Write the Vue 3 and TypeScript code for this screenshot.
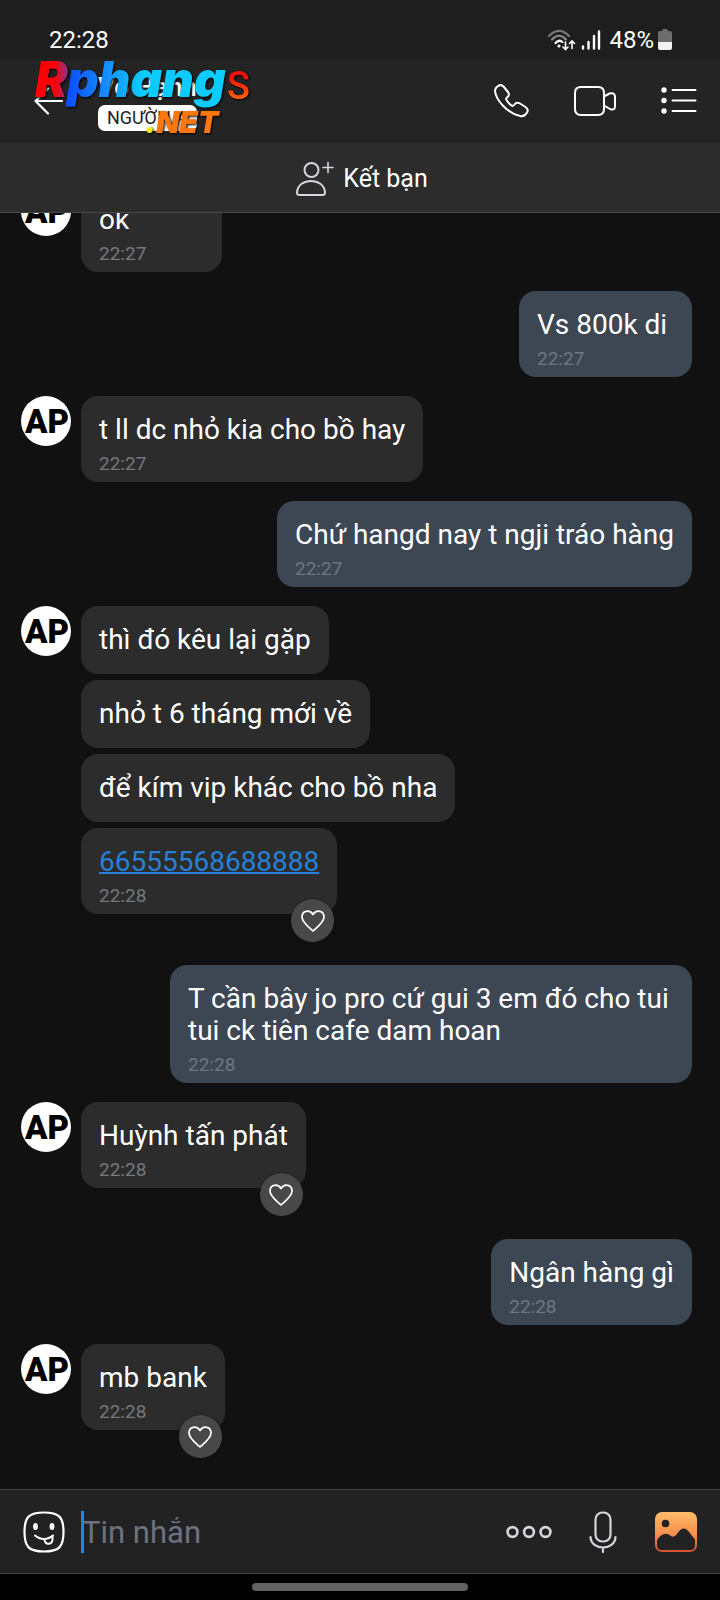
<script setup lang="ts">
import { ref } from 'vue'

interface Message {
  text: string
  time?: string
  link?: boolean
  liked?: boolean
}

interface Group {
  mine: boolean
  messages: Message[]
}

const draft = ref('')

const groups: Group[] = [
  { mine: false, messages: [{ text: 'ok', time: '22:27' }] },
  { mine: true, messages: [{ text: 'Vs 800k di', time: '22:27' }] },
  { mine: false, messages: [{ text: 't ll dc nhỏ kia cho bồ hay', time: '22:27' }] },
  { mine: true, messages: [{ text: 'Chứ hangd nay t ngji tráo hàng', time: '22:27' }] },
  {
    mine: false,
    messages: [
      { text: 'thì đó kêu lại gặp' },
      { text: 'nhỏ t 6 tháng mới về' },
      { text: 'để kím vip khác cho bồ nha' },
      { text: '66555568688888', time: '22:28', link: true, liked: true },
    ],
  },
  {
    mine: true,
    messages: [{ text: 'T cần bây jo pro cứ gui 3 em đó cho tui tui ck tiên cafe dam hoan', time: '22:28' }],
  },
  { mine: false, messages: [{ text: 'Huỳnh tấn phát', time: '22:28', liked: true }] },
  { mine: true, messages: [{ text: 'Ngân hàng gì', time: '22:28' }] },
  { mine: false, messages: [{ text: 'mb bank', time: '22:28', liked: true }] },
]
</script>

<template>
  <div class="phone">
    <div class="status">
      <span class="clock">22:28</span>
      <div class="indicators">
        <svg width="30" height="24" viewBox="0 0 30 24" fill="none" stroke-linecap="round" aria-hidden="true">
          <path d="M2 8Q12 -2 22 8" stroke="#777" stroke-width="2.2" />
          <path d="M5 11.500Q12 4 19 11.500" stroke="#8a8a8a" stroke-width="2.200" />
          <path d="M8.500 15Q12 11 15.500 14" stroke="#fff" stroke-width="2.200" />
          <circle cx="12" cy="18" r="1.600" fill="#fff" />
          <path d="M18.500 14v7.500M16 19l2.500 2.500 2.500-2.500M25 20.500v-7M22.500 15.500l2.500-2.500 2.500 2.500" stroke="#fff" stroke-width="1.600" />
        </svg>
        <svg width="20" height="22" viewBox="0 0 20 22" stroke="#fff" stroke-width="2.400" stroke-linecap="round" aria-hidden="true">
          <path d="M2 17.500v2M7.500 13v6.500M13 7v12.500M18 2.500v17" />
        </svg>
        <span class="percent">48%</span>
        <svg width="14" height="22" viewBox="0 0 14 22" aria-hidden="true">
          <path d="M4 2a2 2 0 0 1 2-2h2a2 2 0 0 1 2 2h2a2 2 0 0 1 2 2v9H0V4a2 2 0 0 1 2-2z" fill="#6d6d6d" />
          <path d="M0 13h14v6a2 2 0 0 1-2 2H2a2 2 0 0 1-2-2z" fill="#f2f2f2" />
        </svg>
      </div>
    </div>

    <header class="header">
      <button class="icon-button back" type="button" aria-label="Quay lại">
        <svg width="30" height="28" viewBox="0 0 30 28" fill="none" stroke="#fff" stroke-width="2.200" stroke-linecap="round" stroke-linejoin="round">
          <path d="M28 14H1.500M14 1.500L1.500 14L14 26.500" />
        </svg>
      </button>
      <div class="contact">
        <h1 class="name">Võ Hạnh</h1>
        <span class="tag">NGƯỜI LẠ</span>
      </div>
      <div class="actions">
        <button class="icon-button" type="button" aria-label="Gọi thoại">
          <svg width="36" height="36" viewBox="0 0 36 36" fill="none" stroke="#fff" stroke-width="2" stroke-linejoin="round">
            <path d="M2 8Q2 5 5 3Q8 1 10.500 3.500L15 9Q17 12 14.500 14Q12.500 15.500 13.500 17C15 19.500 16 21 18.500 22.500Q20 23.500 21.500 21.500Q23.500 18.500 27 20.500L32.500 24Q36 26.500 34 29.500Q31.500 34 27 33C14 30 3 17 2 8Z" />
          </svg>
        </button>
        <button class="icon-button" type="button" aria-label="Gọi video">
          <svg width="44" height="32" viewBox="0 0 44 32" fill="none" stroke="#fff" stroke-width="2" stroke-linejoin="round">
            <path d="M8 2H25Q31 2 31 8V11.500L36.500 8.500Q42 7 42 12V21Q42 26 37 24L31 20.500V24Q31 30 25 30H8Q2 30 2 24V8Q2 2 8 2ZM31 11.500V20.500" />
          </svg>
        </button>
        <button class="icon-button" type="button" aria-label="Tùy chọn">
          <svg width="36" height="28" viewBox="0 0 36 28" aria-hidden="true">
            <g fill="#fff"><circle cx="3" cy="3" r="2.700" /><circle cx="3" cy="13.500" r="2.700" /><circle cx="3" cy="24" r="2.700" /></g>
            <path d="M11.500 3H34.500M11.500 13.500H34.500M11.500 24H34.500" stroke="#fff" stroke-width="2" stroke-linecap="round" />
          </svg>
        </button>
      </div>
      <svg class="watermark" width="224" height="84" viewBox="0 0 224 84" aria-label="Rphangs.NET">
        <defs>
          <linearGradient id="wm-r" x1="0" x2="1"><stop offset="0.600" stop-color="#fb0206" /><stop offset="1" stop-color="#7d3aa0" /></linearGradient>
          <linearGradient id="wm-p" gradientUnits="userSpaceOnUse" x1="34" x2="110" y1="0" y2="0"><stop offset="0" stop-color="#0b4bff" /><stop offset="0.500" stop-color="#1689ff" /><stop offset="1" stop-color="#0ccbff" /></linearGradient>
          <linearGradient id="wm-s" x1="0" x2="0" y1="0" y2="1"><stop offset="0.300" stop-color="#f5100c" /><stop offset="0.900" stop-color="#ff7308" /></linearGradient>
        </defs>
        <text class="wm-main" x="3" y="38" fill="url(#wm-r)">R</text>
        <text class="wm-main" x="35" y="38" fill="url(#wm-p)">phang</text>
        <text class="wm-s" x="195" y="40" fill="url(#wm-s)">S</text>
        <text class="wm-net" x="113" y="74"><tspan fill="#f4ed13">.</tspan><tspan fill="#ff760c">NET</tspan></text>
      </svg>
    </header>

    <button class="add-friend" type="button">
      <svg width="38" height="36" viewBox="0 0 38 36" fill="none" stroke="#d5d5df" stroke-width="2" stroke-linecap="round" stroke-linejoin="round" aria-hidden="true">
        <circle cx="15.500" cy="9" r="7" />
        <path d="M3.500 34Q1 34 1 31.500C2 16 28 16 29 31.500Q29 34 26.500 34Z" />
        <path d="M32 1.500V11.500M27 6.500H37" stroke-width="1.600" />
      </svg>
      <span>Kết bạn</span>
    </button>

    <main class="chat">
      <section v-for="(group, g) in groups" :key="g" class="group" :class="{ mine: group.mine }">
        <svg v-if="!group.mine" class="avatar" width="50" height="50" viewBox="0 0 50 50" aria-label="AP">
          <circle cx="25" cy="25" r="25" fill="#fff" />
          <text class="avatar-text" x="26" y="37" text-anchor="middle">AP</text>
        </svg>
        <div class="stack">
          <div
            v-for="(message, m) in group.messages"
            :key="m"
            class="bubble"
            :class="{ timed: message.time, liked: message.liked }"
          >
            <a v-if="message.link" class="text link" :href="'tel:' + message.text">{{ message.text }}</a>
            <p v-else class="text">{{ message.text }}</p>
            <time v-if="message.time" class="time">{{ message.time }}</time>
            <button v-if="message.liked" class="heart" type="button" aria-label="Thả tim">
              <svg width="24" height="22" viewBox="0 0 24 22" fill="none" stroke="#fff" stroke-width="1.700" stroke-linejoin="round">
                <path d="M12 21C9 18 1 12.500 1 7C1 1 8.500-1 12 4.500C15.500-1 23 1 23 7C23 12.500 15 18 12 21Z" />
              </svg>
            </button>
          </div>
        </div>
      </section>
    </main>

    <form class="composer" @submit.prevent>
      <button class="icon-button" type="button" aria-label="Biểu tượng cảm xúc">
        <svg width="42" height="42" viewBox="0 0 42 42" fill="none" stroke="#fff" stroke-width="2.200" stroke-linecap="round" stroke-linejoin="round">
          <path d="M21 1.500C36 1.500 40.500 6 40.500 21S36 40.500 21 40.500S1.500 36 1.500 21S6 1.500 21 1.500Z" />
          <ellipse cx="12.500" cy="15.500" rx="2.400" ry="3.500" fill="#fff" stroke="none" />
          <ellipse cx="29" cy="15.500" rx="2.400" ry="3.500" fill="#fff" stroke="none" />
          <path d="M12 24.500C17 29 25 29 30 24.500M21.500 28C21 34 29.500 34.500 29.500 28.500V25" stroke-width="2" />
        </svg>
      </button>
      <label class="field">
        <span class="caret" aria-hidden="true"></span>
        <input v-model="draft" class="input" type="text" placeholder="Tin nhắn" aria-label="Tin nhắn" />
      </label>
      <div class="tools">
        <button class="icon-button" type="button" aria-label="Thêm">
          <svg width="46" height="14" viewBox="0 0 46 14" fill="none" stroke="#d5d5df" stroke-width="2.600">
            <circle cx="6.500" cy="7" r="4.900" /><circle cx="23" cy="7" r="4.900" /><circle cx="39.500" cy="7" r="4.900" />
          </svg>
        </button>
        <button class="icon-button" type="button" aria-label="Ghi âm">
          <svg width="28" height="42" viewBox="0 0 28 42" fill="none" stroke="#d5d5df" stroke-width="2.200" stroke-linecap="round">
            <rect x="6.500" y="1.500" width="15" height="29" rx="7" />
            <path d="M1.500 26C2 40 26 40 26.500 26M14 37V41" />
          </svg>
        </button>
        <button class="icon-button" type="button" aria-label="Gửi ảnh">
          <svg width="44" height="40" viewBox="0 0 44 40">
            <defs><linearGradient id="photo" x1="0" x2="0" y1="0" y2="1"><stop offset="0" stop-color="#ffbd69" /><stop offset="0.600" stop-color="#f58a4b" /><stop offset="1" stop-color="#d45432" /></linearGradient></defs>
            <rect x="1" y="0" width="42" height="40" rx="7" fill="url(#photo)" />
            <circle cx="11.500" cy="11.500" r="3.800" fill="#222" />
            <path d="M3 28C8 21 12 20 17 24Q20 26 23 22C28 14 32 16 35 20L41 27.500V33Q41 38 36 38H8Q3 38 3 33Z" fill="#222" />
          </svg>
        </button>
      </div>
    </form>
    <div class="nav"><span class="handle"></span></div>
  </div>
</template>

<style>
body {
  background: #111;
}
</style>

<style scoped>
* {
  box-sizing: border-box;
}

button {
  border: 0;
  padding: 0;
  background: none;
  color: inherit;
  font: inherit;
}

svg {
  display: block;
  flex: none;
}

.phone {
  display: flex;
  flex-direction: column;
  height: 100vh;
  background: #111;
  color: #fff;
  font-family: Roboto, "Noto Sans", sans-serif;
}

.status {
  display: flex;
  flex: none;
  align-items: center;
  justify-content: space-between;
  height: 59px;
  padding: 20px 48px 0 49px;
  background: #1e1e1e;
  font-size: 24px;
  line-height: 24px;
}

.indicators {
  display: flex;
  align-items: center;
  gap: 4px;
}

.percent {
  margin-left: 4px;
}

.header {
  position: relative;
  display: flex;
  flex: none;
  align-items: center;
  height: 84px;
  padding: 0 23px 0 34px;
  background: #242424;
}

.contact {
  display: flex;
  flex: 1;
  flex-direction: column;
  align-items: flex-start;
  gap: 3px;
  margin-left: 34px;
}

.name {
  margin: 0;
  font-size: 26px;
  font-weight: 500;
  line-height: 30px;
}

.tag {
  padding: 0 9px;
  border-radius: 7px;
  background: #fff;
  color: #222;
  font-size: 18px;
  line-height: 26px;
}

.actions {
  display: flex;
  align-items: center;
  gap: 44px;
}

.watermark {
  position: absolute;
  top: 0;
  left: 32px;
  filter: drop-shadow(1px 1px 1px #000);
}

.wm-main {
  font: italic 900 49px Inter, sans-serif;
}

.wm-s {
  font: 500 38px Roboto, sans-serif;
}

.wm-net {
  font: italic 900 30px Inter, sans-serif;
}

.add-friend {
  display: flex;
  flex: none;
  align-items: center;
  justify-content: center;
  gap: 9px;
  height: 70px;
  padding: 2px 0 0 4px;
  border-bottom: 1px solid #484848;
  background: #2c2c2c;
  font-size: 25px;
}

.chat {
  display: flex;
  flex: 1;
  flex-direction: column;
  justify-content: flex-end;
  gap: 19px;
  min-height: 0;
  padding: 0 28px 27px 21px;
  overflow: hidden;
}

.group {
  display: flex;
  flex: none;
  align-items: flex-start;
  gap: 10px;
}

.mine {
  justify-content: flex-end;
}

.avatar-text {
  font: 900 33px Roboto, sans-serif;
}

.stack {
  display: flex;
  flex-direction: column;
  align-items: flex-start;
  gap: 6px;
  max-width: 522px;
}

.bubble {
  position: relative;
  min-width: 141px;
  padding: 18px;
  border-radius: 17px;
  background: #2c2c2c;
}

.mine .bubble {
  min-width: 173px;
  background: #3d4754;
}

.timed {
  padding-bottom: 8px;
}

.liked {
  margin-bottom: 32px;
}

.text {
  display: block;
  margin: 0;
  font-size: 28px;
  line-height: 32px;
}

.link {
  color: #2581d8;
  text-decoration-thickness: 2px;
}

.time {
  display: block;
  margin-top: 8px;
  color: #77787c;
  font-size: 19px;
  line-height: 20px;
}

.mine .time {
  color: #6d7682;
}

.heart {
  position: absolute;
  right: 3px;
  bottom: -28px;
  display: flex;
  align-items: center;
  justify-content: center;
  width: 43px;
  height: 43px;
  border-radius: 50%;
  background: #484848;
  box-shadow: 0 0 2px #111;
}

.composer {
  display: flex;
  flex: none;
  align-items: center;
  gap: 16px;
  height: 85px;
  padding: 0 22px 0 23px;
  border-top: 1px solid #414141;
  border-bottom: 1px solid #414141;
  background: #222;
}

.field {
  display: flex;
  flex: 1;
  align-items: center;
  min-width: 0;
}

.caret {
  flex: none;
  width: 3px;
  height: 42px;
  margin-right: -2px;
  background: #1e88e5;
}

.input {
  flex: 1;
  min-width: 0;
  padding: 2px 0 0;
  border: 0;
  outline: 0;
  background: none;
  color: #fff;
  font: 31px Roboto, "Noto Sans", sans-serif;
}

.input::placeholder {
  color: #6d7280;
  opacity: 1;
}

.tools {
  display: flex;
  align-items: center;
  gap: 37px;
}

.nav {
  display: flex;
  flex: none;
  justify-content: center;
  height: 26px;
  padding-top: 9px;
  background: #000;
}

.handle {
  width: 30%;
  height: 8px;
  border-radius: 4px;
  background: #626262;
}
</style>
